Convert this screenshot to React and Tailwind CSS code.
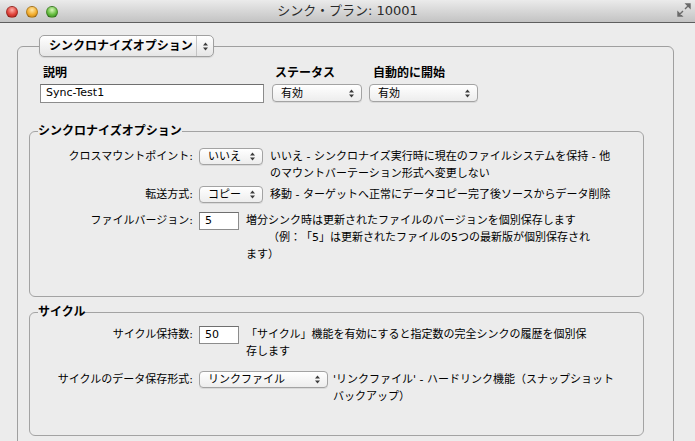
import React from "react";

function Arrows() {
  return (
    <svg width="5" height="9" viewBox="0 0 5 9" className="shrink-0">
      <path d="M2.5 0.5L5 3.5H0Z M2.5 8.5L0 5.5H5Z" fill="#3c3c3c" />
    </svg>
  );
}

function Select({ value, className }) {
  return (
    <div
      className={
        "flex items-center justify-between h-[17px] rounded-[4px] border border-[#a3a3a3] bg-linear-to-b from-white to-[#ededed] shadow-[0_1px_0_rgba(0,0,0,0.08)] pl-[8px] pr-[7px] " +
        className
      }
    >
      <span className="leading-[15px]">{value}</span>
      <Arrows />
    </div>
  );
}

function TextInput({ value, className }) {
  return (
    <div
      className={
        "h-[18px] border border-[#8c8c8c] border-t-[#6f6f6f] bg-white pl-[5px] leading-[16px] " +
        className
      }
    >
      {value}
    </div>
  );
}

function Row({ label, children, desc, descClass = "ml-[7px]", className = "" }) {
  return (
    <div className={"flex items-start " + className}>
      <div className="w-[163px] text-right leading-[17px] whitespace-nowrap">{label}</div>
      <div className="ml-[6px]">{children}</div>
      <div className={"leading-[17px] whitespace-pre " + descClass}>{desc}</div>
    </div>
  );
}

function Light({ className }) {
  return <div className={"w-[12px] h-[12px] rounded-full border border-black/25 " + className} />;
}

export default function App() {
  return (
    <div className="w-[695px] h-[441px] overflow-hidden bg-[#ececec] text-[11px] text-black [text-spacing-trim:space-all] font-['DejaVu_Sans','Noto_Sans_CJK_JP',sans-serif]">
      {/* title bar */}
      <div className="relative flex items-center h-[23px] border-b border-[#5e5e5e] bg-linear-to-b from-[#ebebeb] to-[#c3c3c3]">
        <div className="flex items-center gap-[8px] pl-[6px] pt-[1px]">
          <Light className="bg-[radial-gradient(circle_at_50%_30%,#ffb1aa,#e0443c_55%,#a61c16)]" />
          <Light className="bg-[radial-gradient(circle_at_50%_30%,#ffe7a6,#f3ae2e_55%,#b57512)]" />
          <Light className="bg-[radial-gradient(circle_at_50%_30%,#d8f7bb,#65bd3f_55%,#2e7d1c)]" />
        </div>
        <div className="flex-1 text-center text-[13px] text-[#2b2b2b] leading-[22px] pr-[40px]">
          シンク・プラン: 10001
        </div>
        <svg width="14" height="14" viewBox="0 0 14 14" className="mr-[4px] mb-[3px]">
          <path d="M13 1L8 6M13 1H9.2L13 4.8Z" stroke="#6a6a6a" strokeWidth="1.4" fill="#6a6a6a" />
          <path d="M1 13L6 8M1 13H4.8L1 9.2Z" stroke="#6a6a6a" strokeWidth="1.4" fill="#6a6a6a" />
        </svg>
      </div>

      <div className="pt-[12px] pl-[17px]">
        <fieldset className="w-[657px] border border-[#9f9f9f] rounded-[6px] pl-[11px] pb-[60px]">
          <legend className="ml-[10px] p-0">
            <div className="flex items-stretch h-[22px] w-[175px] rounded-[5px] border border-[#a0a0a0] bg-linear-to-b from-white to-[#e6e6e6] shadow-[0_1px_1px_rgba(0,0,0,0.1)]">
              <div className="flex-1 pl-[9px] font-bold text-[12px] leading-[20px]">シンクロナイズオプション</div>
              <div className="w-[17px] border-l border-[#c4c4c4] flex items-center justify-center">
                <Arrows />
              </div>
            </div>
          </legend>

          {/* top fields */}
          <div className="flex mt-[8px] ml-[11px]">
            <div className="w-[224px]">
              <div className="pl-[3px] font-bold text-[12px] leading-[16px]">説明</div>
              <TextInput value="Sync-Test1" className="mt-[3px] h-[19px] pl-[3px]" />
            </div>
            <div className="w-[90px] ml-[8px]">
              <div className="pl-[3px] font-bold text-[12px] leading-[16px]">ステータス</div>
              <Select value="有効" className="mt-[3px] h-[18px]" />
            </div>
            <div className="w-[109px] ml-[7px]">
              <div className="pl-[4px] font-bold text-[12px] leading-[16px]">自動的に開始</div>
              <Select value="有効" className="mt-[3px] h-[18px]" />
            </div>
          </div>

          {/* sync options */}
          <fieldset className="mt-[20px] w-[615px] border border-[#a3a3a3] rounded-[6px] pb-[33px]">
            <legend className="ml-[8px] p-0 font-bold text-[12px] leading-[16px]">シンクロナイズオプション</legend>
            <Row
              className="mt-[9px]"
              label="クロスマウントポイント:"
              desc={"いいえ - シンクロナイズ実行時に現在のファイルシステムを保持 - 他\nのマウントバーテーション形式へ変更しない"}
            >
              <Select value="いいえ" className="w-[64px]" />
            </Row>
            <Row className="mt-[4px]" label="転送方式:" desc="移動 - ターゲットへ正常にデータコピー完了後ソースからデータ削除">
              <Select value="コピー" className="w-[64px]" />
            </Row>
            <Row
              className="mt-[9px]"
              label="ファイルバージョン:"
              desc={"増分シンク時は更新されたファイルのバージョンを個別保存します\n\u3000\u3000（例：「5」は更新されたファイルの5つの最新版が個別保存され\nます）"}
            >
              <TextInput value="5" className="w-[40px]" />
            </Row>
          </fieldset>

          {/* cycle */}
          <fieldset className="mt-[7px] w-[615px] border border-[#a3a3a3] rounded-[6px] pb-[30px]">
            <legend className="ml-[8px] p-0 font-bold text-[12px] leading-[16px]">サイクル</legend>
            <Row
              className="mt-[6px]"
              label="サイクル保持数:"
              desc={"「サイクル」機能を有効にすると指定数の完全シンクの履歴を個別保\n存します"}
            >
              <TextInput value="50" className="w-[40px]" />
            </Row>
            <Row
              className="mt-[11px]"
              label="サイクルのデータ保存形式:"
              descClass="ml-[5px]"
              desc={"'リンクファイル' - ハードリンク機能（スナップショット\nバックアップ）"}
            >
              <Select value="リンクファイル" className="w-[129px]" />
            </Row>
          </fieldset>
        </fieldset>
      </div>
    </div>
  );
}
